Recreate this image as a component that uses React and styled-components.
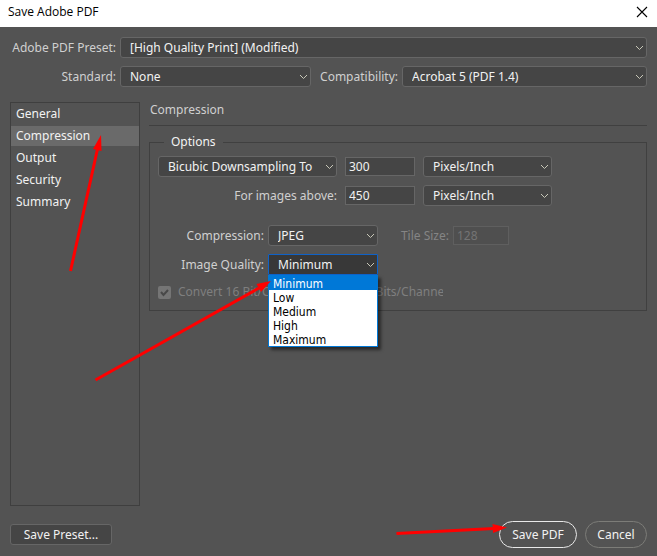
import React from "react";
import styled, { createGlobalStyle, css } from "styled-components";

const GlobalStyle = createGlobalStyle`
  *, *::before, *::after { box-sizing: border-box; }
  body { margin: 0; background: #535353; }
  body, button, input, select {
    font-family: "Noto Sans", "Open Sans", sans-serif;
    font-size: 12px;
    line-height: 16px;
  }
`;

const Dialog = styled.main`
  position: relative;
  display: flex;
  flex-direction: column;
  min-height: 100vh;
  background: #535353;
  color: #d0d0d0;
`;

const TitleBar = styled.header`
  display: flex;
  align-items: center;
  justify-content: space-between;
  height: 27px;
  padding: 0 9px 4px 8px;
  background: #fff;
  color: #000;
`;

const Title = styled.h1`
  margin: 0;
  font: 400 12px/16px "Open Sans", sans-serif;
`;

const CloseButton = styled.button`
  display: flex;
  padding: 0;
  border: 0;
  background: none;
  color: #000;
`;

const Body = styled.form`
  display: flex;
  flex: 1;
  flex-direction: column;
  padding: 10px 10px 8px;
`;

const Presets = styled.div`
  display: grid;
  grid-template-columns: 106px 191px 83px 1fr;
  column-gap: 4px;
  row-gap: 8px;
`;

const Label = styled.label`
  align-self: center;
  text-align: right;
  white-space: nowrap;
  color: ${(p) => (p.$dim ? "#858585" : "#d0d0d0")};
`;

const SelectBox = styled.div`
  display: grid;
  grid-template-columns: 1fr 18px;
  align-items: center;
  position: relative;
  ${(p) => p.$wide && css`grid-column: span 3;`}
`;

const Select = styled.select`
  grid-area: 1 / 1 / 2 / 3;
  width: 100%;
  height: 21px;
  padding: 0 20px 0 9px;
  appearance: none;
  border: 1px solid ${(p) => (p.$open ? "#0f62c8" : "#666")};
  border-radius: ${(p) => (p.$open ? "1px" : "3px")};
  outline: 0;
  background: ${(p) => (p.$open ? "#383838" : "#454545")};
  color: #f2f2f2;
`;

const ChevronIcon = styled.svg`
  grid-area: 1 / 2;
  width: 9px;
  height: 6px;
  margin-left: 6px;
  pointer-events: none;
`;

const Columns = styled.div`
  display: grid;
  grid-template-columns: 130px 1fr;
  flex: 1;
  gap: 9px;
  margin-top: 15px;
`;

const Sections = styled.nav`
  padding-top: 1px;
  border: 1px solid #3f3f3f;
`;

const SectionLink = styled.a`
  display: block;
  height: 20px;
  margin-bottom: 2px;
  padding: 2px 5px;
  background: ${(p) => (p.$active ? "#6a6a6a" : "transparent")};
  color: #f2f2f2;
  text-decoration: none;
`;

const Panel = styled.section`
  display: flex;
  flex-direction: column;
`;

const PanelTitle = styled.h2`
  height: 24px;
  margin: 0 0 8px;
  padding: 0 1px;
  border-bottom: 1px solid #404040;
  font-size: 12px;
  font-weight: 400;
`;

const Options = styled.fieldset`
  min-width: 0;
  margin: 0;
  padding: 6px 8px 10px;
  border: 1px solid #404040;
`;

const Legend = styled.legend`
  margin-left: 6px;
  padding: 0 7px;
  color: #f2f2f2;
`;

const ResolutionGrid = styled.div`
  display: grid;
  grid-template-columns: 179px 70px 129px;
  align-items: center;
  gap: 8px;
`;

const QualityGrid = styled.div`
  display: grid;
  grid-template-columns: 106px 110px 67px 56px;
  align-items: center;
  column-gap: 4px;
  row-gap: 8px;
  margin-top: 19px;
`;

const TextInput = styled.input`
  width: 100%;
  height: 19px;
  padding: 0 3px;
  border: 1px solid #666;
  border-radius: 0;
  outline: 0;
  background: #454545;
  color: #f2f2f2;
  &:disabled {
    border-color: #5f5f5f;
    background: #4f4f4f;
    color: #747474;
  }
`;

const OptionList = styled.ul`
  position: absolute;
  top: 100%;
  left: 0;
  right: 0;
  z-index: 1;
  margin: 0;
  padding: 0;
  border: 1px solid #0078d7;
  background: #fff;
  box-shadow: 3px 3px 3px rgba(0, 0, 0, 0.5);
  list-style: none;
`;

const Option = styled.li`
  height: 14px;
  padding-left: 4px;
  font-family: "DejaVu Sans Condensed", "DejaVu Sans", sans-serif;
  line-height: 16px;
  background: ${(p) => (p.$selected ? "#0078d7" : "#fff")};
  color: ${(p) => (p.$selected ? "#fff" : "#000")};
`;

const CheckRow = styled.div`
  display: flex;
  align-items: center;
  gap: 7px;
  margin-top: 9px;
`;

const CheckBox = styled.span`
  display: grid;
  width: 13px;
  height: 13px;
  border-radius: 2px;
  background: #757575;
`;

const CheckInput = styled.input`
  grid-area: 1 / 1;
  width: 13px;
  height: 13px;
  margin: 0;
  appearance: none;
`;

const CheckMark = styled.svg`
  grid-area: 1 / 1;
  pointer-events: none;
`;

const CheckLabel = styled.label`
  max-width: 265px;
  overflow: hidden;
  white-space: nowrap;
  color: #7f7f7f;
`;

const Footer = styled.footer`
  display: flex;
  align-items: center;
  gap: 8px;
  margin-top: 15px;
`;

const PresetButton = styled.button`
  width: 102px;
  height: 21px;
  margin-right: auto;
  padding: 0;
  border: 1px solid #666;
  border-radius: 3px;
  background: #454545;
  color: #f2f2f2;
`;

const PillButton = styled.button`
  width: ${(p) => (p.$primary ? "78px" : "62px")};
  height: 27px;
  padding: 0;
  border: ${(p) => (p.$primary ? "1px solid #e8e8e8" : "1px solid #7c7c78")};
  border-radius: 14px;
  background: none;
  color: #f2f2f2;
`;

const Pointers = styled.svg`
  position: absolute;
  top: 0;
  left: 0;
  z-index: 2;
  pointer-events: none;
`;

function Dropdown({ id, value, wide, open, children }) {
  return (
    <SelectBox $wide={wide}>
      <Select id={id} aria-label={id} defaultValue={value} $open={open}>
        <option>{value}</option>
      </Select>
      <ChevronIcon viewBox="0 0 9 6" aria-hidden="true">
        <path d="M1 1 L4.5 4.5 L8 1" fill="none" stroke="#c8c8b8" strokeWidth="1" />
      </ChevronIcon>
      {children}
    </SelectBox>
  );
}

const sections = ["General", "Compression", "Output", "Security", "Summary"];
const qualities = ["Minimum", "Low", "Medium", "High", "Maximum"];

export default function App() {
  return (
    <Dialog>
      <GlobalStyle />
      <TitleBar>
        <Title>Save Adobe PDF</Title>
        <CloseButton aria-label="Close">
          <svg width="12" height="12" viewBox="0 0 12 12">
            <path d="M1 1 L11 11 M11 1 L1 11" stroke="currentColor" strokeWidth="1.1" />
          </svg>
        </CloseButton>
      </TitleBar>
      <Body onSubmit={(e) => e.preventDefault()}>
        <Presets>
          <Label htmlFor="preset">Adobe PDF Preset:</Label>
          <Dropdown id="preset" value="[High Quality Print] (Modified)" wide />
          <Label htmlFor="standard">Standard:</Label>
          <Dropdown id="standard" value="None" />
          <Label htmlFor="compatibility">Compatibility:</Label>
          <Dropdown id="compatibility" value="Acrobat 5 (PDF 1.4)" />
        </Presets>
        <Columns>
          <Sections>
            {sections.map((name) => (
              <SectionLink key={name} href={"#" + name} $active={name === "Compression"}>
                {name}
              </SectionLink>
            ))}
          </Sections>
          <Panel>
            <PanelTitle>Compression</PanelTitle>
            <Options>
              <Legend>Options</Legend>
              <ResolutionGrid>
                <Dropdown id="sampling" value="Bicubic Downsampling To" />
                <TextInput aria-label="Resolution" defaultValue="300" />
                <Dropdown id="unit" value="Pixels/Inch" />
                <Label htmlFor="above">For images above:</Label>
                <TextInput id="above" defaultValue="450" />
                <Dropdown id="above-unit" value="Pixels/Inch" />
              </ResolutionGrid>
              <QualityGrid>
                <Label htmlFor="compression">Compression:</Label>
                <Dropdown id="compression" value="JPEG" />
                <Label htmlFor="tile" $dim>Tile Size:</Label>
                <TextInput id="tile" defaultValue="128" disabled />
                <Label htmlFor="quality">Image Quality:</Label>
                <Dropdown id="quality" value="Minimum" open>
                  <OptionList role="listbox" aria-label="Image Quality">
                    {qualities.map((name) => (
                      <Option key={name} role="option" aria-selected={name === "Minimum"} $selected={name === "Minimum"}>
                        {name}
                      </Option>
                    ))}
                  </OptionList>
                </Dropdown>
              </QualityGrid>
              <CheckRow>
                <CheckBox>
                  <CheckInput id="convert" type="checkbox" defaultChecked disabled />
                  <CheckMark width="13" height="13" viewBox="0 0 13 13" aria-hidden="true">
                    <path d="M3 6 L5.5 9 L10 4" fill="none" stroke="#484848" strokeWidth="2" />
                  </CheckMark>
                </CheckBox>
                <CheckLabel htmlFor="convert">Convert 16 Bit/Channel Image to 8 Bits/Channel</CheckLabel>
              </CheckRow>
            </Options>
          </Panel>
        </Columns>
        <Footer>
          <PresetButton type="button">Save Preset...</PresetButton>
          <PillButton type="submit" $primary>Save PDF</PillButton>
          <PillButton type="button">Cancel</PillButton>
        </Footer>
      </Body>
      <Pointers width="657" height="556" viewBox="0 0 657 556" aria-hidden="true">
        <g stroke="#f00" strokeWidth="3">
          <path d="M70.500 271 L97.500 149" />
          <path d="M95.500 380 L259 288" />
          <path d="M396.500 533.500 L494 528.500" />
        </g>
        <g fill="#f00">
          <path d="M101 135 L101.500 151 L93 149 Z" />
          <path d="M271 281 L261 292 L256.500 284 Z" />
          <path d="M507 527.500 L493 533 L492.500 524 Z" />
        </g>
      </Pointers>
    </Dialog>
  );
}
